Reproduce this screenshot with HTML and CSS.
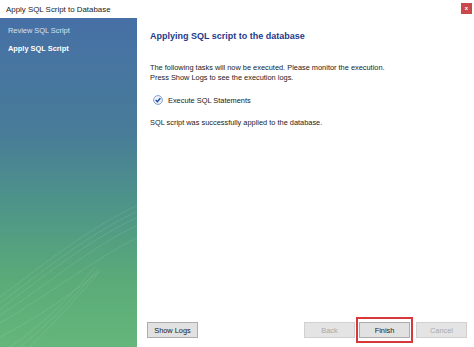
FILE: index.html
```html
<!DOCTYPE html>
<html lang="en">
<head>
    <meta charset="UTF-8">
    <title>Apply SQL Script to Database</title>
    <link rel="stylesheet" href="styles.css">
</head>
<body>
    <div class="window">
        <div class="title-bar">
            <span class="title">Apply SQL Script to Database</span>
            <span class="close">x</span>
        </div>
        <div class="main">
            <div class="sidebar">
                <svg class="swoosh" width="138" height="200" viewBox="0 0 138 200">
                    <g fill="none" stroke="#ffffff" stroke-width="0.7" opacity="0.14">
                        <path d="M0 150 C40 120 90 80 138 58"/>
                        <path d="M0 156 C40 126 90 86 138 64"/>
                        <path d="M0 162 C40 132 90 92 138 70"/>
                        <path d="M0 168 C45 140 90 100 138 78"/>
                        <path d="M0 176 C45 150 95 112 138 90"/>
                        <path d="M10 200 C40 180 70 150 95 120"/>
                        <path d="M20 200 C45 180 75 150 98 122"/>
                        <path d="M30 200 C50 180 78 150 100 124"/>
                        <path d="M0 190 C40 170 80 140 100 124"/>
                    </g>
                </svg>
                <div class="step">Review SQL Script</div>
                <div class="step current">Apply SQL Script</div>
            </div>
            <div class="content">
                <h1 class="heading">Applying SQL script to the database</h1>
                <p class="intro">The following tasks will now be executed. Please monitor the execution.<br>Press Show Logs to see the execution logs.</p>
                <div class="task">
                    <svg class="check" width="10" height="10" viewBox="0 0 10 10">
                        <circle cx="5" cy="5" r="4.4" fill="#eef3fb" stroke="#7a98c8" stroke-width="0.9"/>
                        <path d="M2.7 5.1 L4.3 6.7 L7.4 3.2" fill="none" stroke="#1d4b9a" stroke-width="1.4"/>
                    </svg>
                    <span>Execute SQL Statements</span>
                </div>
                <p class="result">SQL script was successfully applied to the database.</p>
                <div class="buttons">
                    <button class="btn logs">Show Logs</button>
                    <div class="nav">
                        <button class="btn back" disabled>Back</button>
                        <span class="highlight"><button class="btn">Finish</button></span>
                        <button class="btn cancel" disabled>Cancel</button>
                    </div>
                </div>
            </div>
        </div>
    </div>
</body>
</html>
```

FILE: styles.css
```css
body {
    margin: 0;
    font-family: "Liberation Sans", Arial, sans-serif;
    font-size: 7.4px;
    color: #1a1a1a;
    background: #ffffff;
}

.window {
    width: 474px;
    height: 347px;
    display: flex;
    flex-direction: column;
    overflow: hidden;
}

.title-bar {
    height: 18px;
    display: flex;
    align-items: center;
    justify-content: space-between;
    padding: 0 2px 0 6px;
}

.title {
    font-size: 7.9px;
    color: #222222;
}

.close {
    width: 11px;
    height: 11px;
    background: #c9484a;
    color: #ffffff;
    font-size: 6px;
    font-weight: bold;
    display: flex;
    align-items: center;
    justify-content: center;
    margin-top: -2px;
}

.main {
    flex: 1;
    display: flex;
}

.sidebar {
    position: relative;
    width: 137px;
    padding-top: 4px;
    background: linear-gradient(180deg, #4670a6 0%, #487c98 35%, #4f9886 60%, #5aab78 80%, #64b67b 100%);
}

.swoosh {
    position: absolute;
    left: 0;
    bottom: 0;
}

.step {
    position: relative;
    height: 18px;
    line-height: 18px;
    padding-left: 8px;
    font-size: 7.4px;
    color: #d6e2f0;
}

.step.current {
    color: #ffffff;
    font-weight: bold;
}

.content {
    flex: 1;
    display: flex;
    flex-direction: column;
    padding: 13px 7px 4px 13px;
}

.heading {
    margin: 0 0 22px 0;
    font-size: 9px;
    font-weight: bold;
    color: #1e3a8c;
}

.intro {
    margin: 0 0 11px 0;
    line-height: 10px;
}

.task {
    display: flex;
    align-items: center;
    gap: 5px;
    padding-left: 3px;
    height: 12px;
    margin-bottom: 12px;
}

.check {
    display: block;
}

.result {
    margin: 0;
}

.buttons {
    margin-top: auto;
    display: flex;
    align-items: center;
    justify-content: space-between;
}

.logs {
    margin-left: -3px;
}

.nav {
    display: flex;
    align-items: center;
}

.back {
    margin-right: 1px;
}

.cancel {
    margin-left: 3px;
}

.btn {
    width: 51px;
    height: 16px;
    padding: 0;
    font-family: inherit;
    font-size: 7.4px;
    color: #1a1a1a;
    background: #e1e1e1;
    border: 1px solid #adadad;
}

.btn:disabled {
    color: #a8a8a8;
    background: #e4e4e4;
    border-color: #d0d0d0;
}

.highlight {
    display: flex;
    padding: 3px 1px;
    border: 2px solid #d9383a;
}
```
